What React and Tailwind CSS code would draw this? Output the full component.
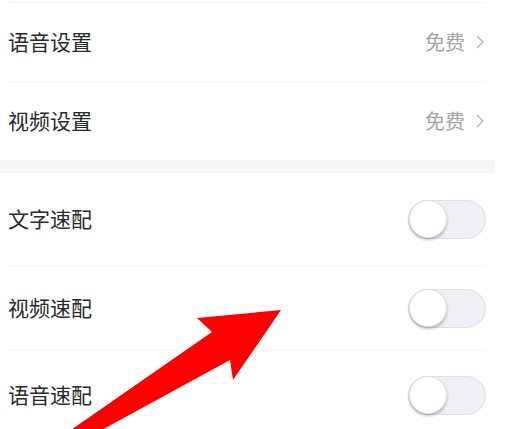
import React from 'react';

const font = { fontFamily: '"Noto Sans CJK SC", "Noto Sans", sans-serif' };

function Chevron() {
  return (
    <svg width="10" height="16" viewBox="0 0 10 16" className="ml-[10px]">
      <path d="M2 2 L8 8 L2 14" fill="none" stroke="#b3b3b3" strokeWidth="1.4" />
    </svg>
  );
}

function Toggle() {
  return (
    <div className="w-[78px] h-[39px] rounded-full bg-[#eef0f5] border border-[#dcdfe4] flex items-center">
      <div className="w-[38px] h-[38px] rounded-full bg-white shadow-[0_2px_3px_rgba(0,0,0,0.25)] border border-[#e2e2e2]" />
    </div>
  );
}

function Divider() {
  return <div className="mx-[10px] border-t border-[#f3f3f3]" />;
}

function LinkRow({ label, height }) {
  return (
    <div className={`flex items-center justify-between pl-[8px] pr-[10px] ${height}`}>
      <span className="text-[21px] text-[#2a2a2a]">{label}</span>
      <div className="flex items-center">
        <span className="text-[20px] text-[#a3a3a3]">免费</span>
        <Chevron />
      </div>
    </div>
  );
}

function SwitchRow({ label, height }) {
  return (
    <div className={`flex items-center justify-between pl-[8px] pr-[9px] ${height}`}>
      <span className="text-[21px] text-[#2a2a2a]">{label}</span>
      <Toggle />
    </div>
  );
}

export default function App() {
  return (
    <div className="relative w-[512px] h-[429px] overflow-hidden bg-white" style={font}>
      <div className="w-[495px]">
        <div className="mt-[2px]">
          <Divider />
        </div>
        <LinkRow label="语音设置" height="h-[78px]" />
        <Divider />
        <LinkRow label="视频设置" height="h-[78px]" />
        <div className="h-[13px] bg-[#f5f5f5]" />
        <SwitchRow label="文字速配" height="h-[92px]" />
        <Divider />
        <SwitchRow label="视频速配" height="h-[84px]" />
        <Divider />
        <SwitchRow label="语音速配" height="h-[88px]" />
      </div>
      <svg className="absolute left-0 top-0" width="512" height="429" viewBox="0 0 512 429">
        <polygon
          points="281,310 233,380 230,360 98,432 68,432 212,332 197,318"
          fill="#ff0000"
        />
      </svg>
    </div>
  );
}
